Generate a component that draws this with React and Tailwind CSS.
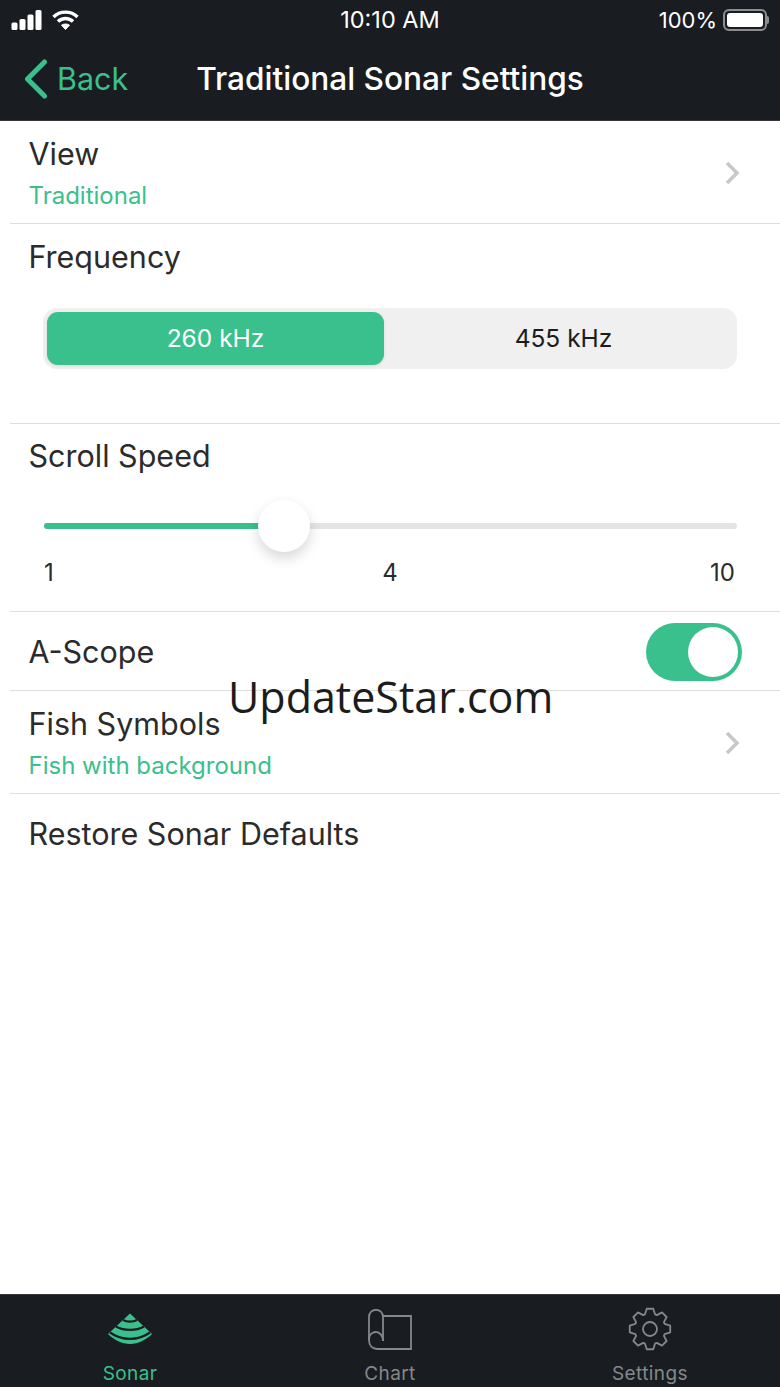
const font = { fontFamily: 'Inter, "Liberation Sans", sans-serif' };

// gear outline with 8 teeth, worked out around the centre
const gearPath = (() => {
  const cx = 22;
  const cy = 22;
  const pts = [];
  for (let i = 0; i < 8; i++) {
    const a = (i * Math.PI) / 4 - Math.PI / 2;
    [[-0.33, 15.5], [-0.16, 20.5], [0.16, 20.5], [0.33, 15.5]].forEach(([da, r]) => {
      pts.push(`${(cx + r * Math.cos(a + da)).toFixed(2)} ${(cy + r * Math.sin(a + da)).toFixed(2)}`);
    });
  }
  return `M${pts.join(' L')} Z`;
})();

function StatusBar() {
  return (
    <div className="grid grid-cols-[1fr_auto_1fr] items-center h-[40px] px-[11px] text-white text-[22px] leading-none">
      <div className="flex items-center gap-[10px]">
        <svg width="31" height="20" viewBox="0 0 31 20" fill="white">
          <rect x="0.5" y="12.5" width="6" height="7.5" rx="1.5" />
          <rect x="8.5" y="9" width="6" height="11" rx="1.5" />
          <rect x="16.5" y="4.5" width="6" height="15.5" rx="1.5" />
          <rect x="24.5" y="0" width="6" height="20" rx="1.5" />
        </svg>
        <svg width="27" height="20" viewBox="0 0 27 20" fill="none" stroke="white" strokeWidth="3.4">
          <path d="M1.5 7 C8 0.5 19 0.5 25.5 7" />
          <path d="M6 11.5 C10 7.5 17 7.5 21 11.5" />
          <path d="M13.5 19.5 L9.5 15.2 C11.5 13.6 15.5 13.6 17.5 15.2 Z" fill="white" strokeWidth="1" />
        </svg>
      </div>
      <div className="text-[23.5px]">10:10 AM</div>
      <div className="flex items-center justify-end gap-[5px]">
        <span className="mr-[1px]">100%</span>
        <div className="flex items-center">
          <div className="w-[44px] h-[22px] rounded-[6px] border-2 border-[#8b8d90] p-[2px]">
            <div className="w-full h-full rounded-[3px] bg-white" />
          </div>
          <div className="w-[2px] h-[8px] rounded-r-sm bg-[#8b8d90]" />
        </div>
      </div>
    </div>
  );
}

function NavBar() {
  return (
    <div className="relative flex items-center justify-center h-[81px] pb-[2px] border-b border-[#33363a]">
      <div className="absolute left-[24px] top-[19px] flex items-center gap-[9px] text-[#3ac08c]">
        <svg width="24" height="40" viewBox="0 0 24 40" fill="none" stroke="#3ac08c" strokeWidth="5" strokeLinecap="round" strokeLinejoin="round">
          <path d="M20.5 3 L3.5 20 L20.5 37" />
        </svg>
        <span className="text-[30.5px] leading-none">Back</span>
      </div>
      <h1 className="text-white text-[31.6px] font-medium leading-none">Traditional Sonar Settings</h1>
    </div>
  );
}

function Row({ className, children }) {
  return <div className={`ml-[10px] pl-[18.5px] border-b border-[#dedede] ${className}`}>{children}</div>;
}

function LinkRow({ title, value }) {
  return (
    <Row className="flex items-center justify-between h-[103px] pt-[2px] pr-[41px]">
      <div>
        <div className="text-[30.5px] leading-[38px] text-[#2b2b2b]">{title}</div>
        <div className="text-[24px] leading-[30px] mt-[8px] text-[#3ac08c]">{value}</div>
      </div>
      <svg width="14" height="24" viewBox="0 0 14 24" fill="none" stroke="#c8c8c8" strokeWidth="3.6">
        <path d="M2 2 L12 12 L2 22" />
      </svg>
    </Row>
  );
}

function Frequency() {
  return (
    <Row className="h-[200px] pr-[43px]">
      <div className="text-[30.5px] leading-[38px] text-[#2b2b2b] pt-[14px]">Frequency</div>
      <div className="flex h-[61px] mt-[32px] ml-[14.5px] p-[4px] rounded-[14px] bg-[#f0f0f0]">
        <div className="flex items-center justify-center w-[337px] rounded-[11px] bg-[#3ac08c] text-white text-[24.5px] shadow-[0_1px_3px_rgba(0,0,0,0.1)]">260 kHz</div>
        <div className="flex items-center justify-center flex-1 pl-[10px] text-[#1c1c1c] text-[24.5px]">455 kHz</div>
      </div>
    </Row>
  );
}

function ScrollSpeed() {
  return (
    <Row className="h-[188px] pr-[43px]">
      <div className="text-[30.5px] leading-[38px] text-[#2b2b2b] pt-[13px]">Scroll Speed</div>
      <div className="relative flex items-center h-[6px] mt-[48px] ml-[15.5px] rounded-full bg-[#e4e4e4]">
        <div className="h-full w-[225px] rounded-full bg-[#3ac08c]" />
        <div className="absolute left-[214px] top-[-23px] w-[52px] h-[52px] rounded-full bg-white shadow-[0_6px_14px_rgba(0,0,0,0.16)]" />
      </div>
      <div className="flex justify-between items-center mt-[29px] ml-[15.5px] pr-[2px] text-[24px] leading-[30px] text-[#2b2b2b]">
        <span>1</span>
        <span className="ml-[16px]">4</span>
        <span>10</span>
      </div>
    </Row>
  );
}

function AScope() {
  return (
    <Row className="flex items-center justify-between h-[79px] pt-[2px] pr-[38px]">
      <div className="text-[30.5px] leading-[38px] text-[#2b2b2b]">A-Scope</div>
      <div className="flex justify-end items-center w-[96px] h-[58px] p-[4px] rounded-full bg-[#3ac08c]">
        <div className="w-[50px] h-[50px] rounded-full bg-white" />
      </div>
    </Row>
  );
}

function SonarIcon() {
  return (
    <svg width="46" height="32" viewBox="0 0 46 32">
      <path d="M23 0.5 L45 21 C39 27 31 31 23 31 C15 31 7 27 1 21 Z" fill="#3ac08c" />
      <g fill="none" stroke="#191c20" strokeWidth="2.2">
        <path d="M16 7 C20 9.2 26 9.2 30 7" />
        <path d="M9 13.5 C17 18 29 18 37 13.5" />
        <path d="M3 19.5 C15 28 31 28 43 19.5" />
      </g>
    </svg>
  );
}

function ChartIcon() {
  return (
    <svg width="44" height="41" viewBox="0 0 44 41" fill="none" stroke="#85888b" strokeWidth="1.8">
      <path d="M15 7 H43 V40 H10" />
      <path d="M1 31 V8 C1 -1.5 15 -1.5 15 8 V32" />
      <path d="M1 31 C1 25 5 23 8 23 C12 23 15 27 15 32" />
      <path d="M1 31 C1 36 4 40 10 40" />
    </svg>
  );
}

function SettingsIcon() {
  return (
    <svg width="44" height="44" viewBox="0 0 44 44" fill="none" stroke="#85888b" strokeWidth="1.8" strokeLinejoin="round">
      <path d={gearPath} />
      <circle cx="22" cy="22" r="7" />
    </svg>
  );
}

function TabBar() {
  const tabs = [
    { name: 'Sonar', icon: <SonarIcon />, color: 'text-[#3ac08c]' },
    { name: 'Chart', icon: <ChartIcon />, color: 'text-[#85888b]' },
    { name: 'Settings', icon: <SettingsIcon />, color: 'text-[#85888b]' },
  ];
  return (
    <div className="grid grid-cols-3 h-[93px] bg-[#191c20] border-t border-[#33363a]">
      {tabs.map((tab) => (
        <div key={tab.name} className="flex flex-col items-center">
          <div className="flex items-center justify-center h-[68px]">{tab.icon}</div>
          <div className={`text-[19px] leading-[22px] tracking-[0.4px] ${tab.color}`}>{tab.name}</div>
        </div>
      ))}
    </div>
  );
}

export default function App() {
  return (
    <div className="relative flex flex-col h-[1387px] bg-white overflow-hidden" style={font}>
      <div className="bg-[#191c20]">
        <StatusBar />
        <NavBar />
      </div>
      <div className="flex-1">
        <LinkRow title="View" value="Traditional" />
        <Frequency />
        <ScrollSpeed />
        <AScope />
        <LinkRow title="Fish Symbols" value="Fish with background" />
        <div className="pl-[28.5px] pt-[21px] text-[30.5px] leading-[38px] text-[#2b2b2b]">Restore Sonar Defaults</div>
      </div>
      <TabBar />
      <div className="absolute left-[228px] top-[668px] text-[43px] leading-[58px] text-[#1c1c1c] font-['Open_Sans']">UpdateStar.com</div>
    </div>
  );
}
